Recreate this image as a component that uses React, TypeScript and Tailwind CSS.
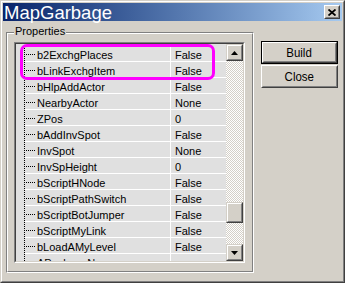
import React from "react";

const rows: [string, string][] = [
  ["b2ExchgPlaces", "False"],
  ["bLinkExchgItem", "False"],
  ["bHlpAddActor", "False"],
  ["NearbyActor", "None"],
  ["ZPos", "0"],
  ["bAddInvSpot", "False"],
  ["InvSpot", "None"],
  ["InvSpHeight", "0"],
  ["bScriptHNode", "False"],
  ["bScriptPathSwitch", "False"],
  ["bScriptBotJumper", "False"],
  ["bScriptMyLink", "False"],
  ["bLoadAMyLevel", "False"],
  ["APackageName", ""],
];

function ScrollBtn({ up }: { up: boolean }) {
  return (
    <div className="h-[17px] w-[17px] shrink-0 border border-t-[#d4d0c8] border-l-[#d4d0c8] border-r-[#404040] border-b-[#404040] bg-[#d4d0c8]">
      <div className="flex h-full w-full items-center justify-center border border-t-white border-l-white border-r-[#808080] border-b-[#808080]">
        <svg width="7" height="4" viewBox="0 0 7 4">
          {up ? (
            <polygon points="3.5,0 7,4 0,4" fill="#000" />
          ) : (
            <polygon points="0,0 7,0 3.5,4" fill="#000" />
          )}
        </svg>
      </div>
    </div>
  );
}

function PushBtn({ label, isDefault }: { label: string; isDefault?: boolean }) {
  const inner = (
    <div className="h-full w-full border border-t-white border-l-white border-r-[#404040] border-b-[#404040]">
      <div className="flex h-full w-full items-center justify-center border border-t-[#d4d0c8] border-l-[#d4d0c8] border-r-[#808080] border-b-[#808080]">
        <span className="inline-block scale-x-[0.85] text-[13.5px] leading-none text-black">{label}</span>
      </div>
    </div>
  );
  return (
    <div className={`h-[23px] w-[77px] ${isDefault ? "border border-black" : ""}`}>{inner}</div>
  );
}

export default function App() {
  return (
    <div
      className="relative h-[283px] w-[345px] overflow-hidden bg-[#d4d0c8] text-black"
      style={{ fontFamily: '"Liberation Sans", Arial, sans-serif' }}
    >
      <div className="h-full w-full border border-t-[#d4d0c8] border-l-[#d4d0c8] border-r-[#404040] border-b-[#404040]">
        <div className="flex h-full w-full flex-col border border-t-white border-l-white border-r-[#808080] border-b-[#808080] p-px">
          {/* title bar */}
          <div className="flex h-[18px] shrink-0 items-center justify-between bg-linear-to-r from-[#0a246a] to-[#a6caf0] pl-px pr-[2px]">
            <span className="mt-[2px] text-[18.5px] leading-none text-white">MapGarbage</span>
            <div className="h-[14px] w-[16px] border border-t-white border-l-white border-r-[#404040] border-b-[#404040] bg-[#d4d0c8]">
              <div className="flex h-full w-full items-center justify-center border border-t-[#d4d0c8] border-l-[#d4d0c8] border-r-[#808080] border-b-[#808080]">
                <svg width="8" height="7" viewBox="0 0 8 7">
                  <path d="M0.5 0.5 L7.5 6.5 M7.5 0.5 L0.5 6.5" stroke="#000" strokeWidth="1.8" />
                </svg>
              </div>
            </div>
          </div>
          {/* body */}
          <div className="flex flex-1 pl-[3px] pt-[11px]">
            {/* group box */}
            <div className="relative h-[241px] w-[248px] shrink-0 border border-t-[#808080] border-l-[#808080] border-r-white border-b-white">
              <span className="absolute left-[7px] top-[-8px] bg-[#d4d0c8] px-[1px] text-[11px] leading-[13px]">Properties</span>
              <div className="h-full w-full border border-t-white border-l-white border-r-[#808080] border-b-[#808080] pl-[6px] pt-[8px]">
                {/* list */}
                <div className="h-[221px] w-[231px] border border-t-[#808080] border-l-[#808080] border-r-white border-b-white">
                  <div className="flex h-full w-full border border-t-[#404040] border-l-[#404040] border-r-[#d4d0c8] border-b-[#d4d0c8]">
                    <div className="flex-1 overflow-hidden bg-[#e0e0e0] pt-[2px]">
                      {rows.map(([name, val], i) => (
                        <div key={i} className="flex h-[16px]">
                          <div className="h-full w-[8px] shrink-0" />
                          <div className="h-full w-px shrink-0 bg-[repeating-linear-gradient(to_bottom,#000_0px_1px,transparent_1px_2px)]" />
                          <div className="flex flex-1 border-b border-white">
                            <div className="flex w-[145px] shrink-0 items-start">
                              <div className="mr-[2px] mt-[8px] h-px w-[10px] shrink-0 bg-[repeating-linear-gradient(to_right,transparent_0px_1px,#000_1px_2px)]" />
                              <span className="mt-[3px] whitespace-nowrap text-[11px] leading-[12px]">{name}</span>
                            </div>
                            <div className="flex flex-1 items-start border-l border-white pl-[4px]">
                              <span className="mt-[3px] text-[11px] leading-[12px]">{val}</span>
                            </div>
                          </div>
                        </div>
                      ))}
                    </div>
                    {/* scrollbar */}
                    <div className="flex h-full w-[17px] shrink-0 flex-col">
                      <ScrollBtn up />
                      <div className="flex flex-1 flex-col bg-[repeating-conic-gradient(#d4d0c8_0%_25%,#ffffff_0%_50%)] bg-[length:2px_2px]">
                        <div className="h-[141px] shrink-0" />
                        <div className="h-[21px] w-[17px] shrink-0 border border-t-[#d4d0c8] border-l-[#d4d0c8] border-r-[#404040] border-b-[#404040] bg-[#d4d0c8]">
                          <div className="h-full w-full border border-t-white border-l-white border-r-[#808080] border-b-[#808080]" />
                        </div>
                        <div className="flex-1" />
                      </div>
                      <ScrollBtn up={false} />
                    </div>
                  </div>
                </div>
              </div>
            </div>
            {/* buttons */}
            <div className="ml-[7px] mt-[9px] flex flex-col gap-px">
              <PushBtn label="Build" isDefault />
              <PushBtn label="Close" />
            </div>
          </div>
        </div>
      </div>
      {/* highlight annotation */}
      <div className="pointer-events-none absolute left-[20px] top-[44px] h-[36px] w-[195px] rounded-[7px] border-[3px] border-[#ff00ff]" />
    </div>
  );
}
